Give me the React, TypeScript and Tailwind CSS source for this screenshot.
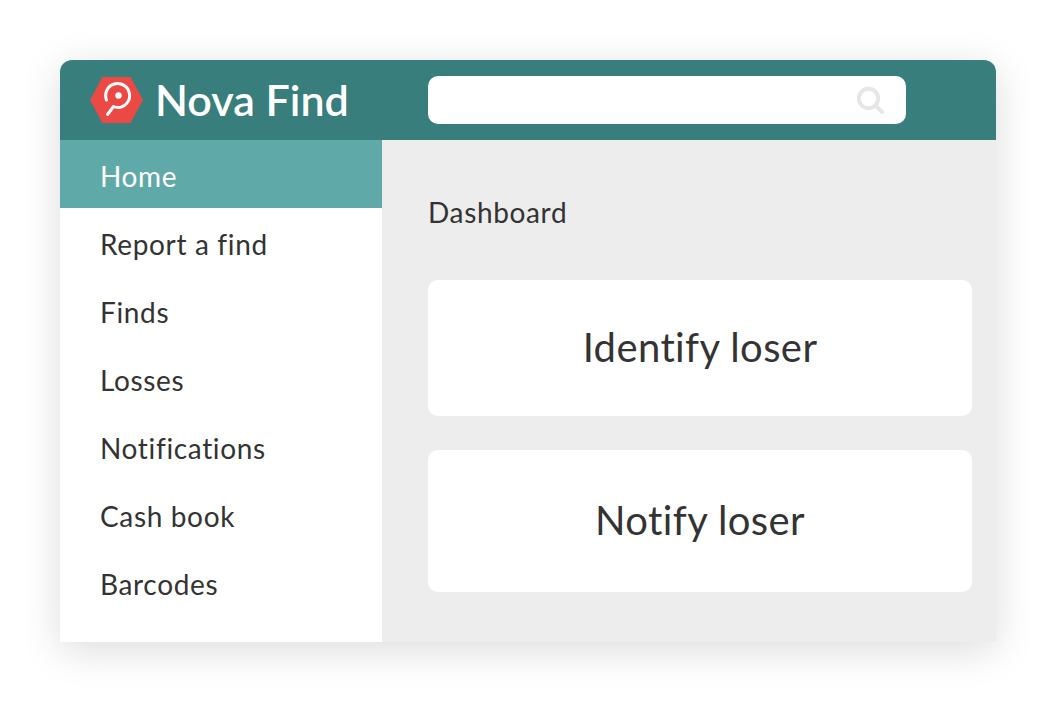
const navItems = ['Home', 'Report a find', 'Finds', 'Losses', 'Notifications', 'Cash book', 'Barcodes'];

function Logo() {
  return (
    <svg width="54" height="46" viewBox="0 0 54 46" className="shrink-0">
      <polygon points="0,23 12.500,0 40.500,0 53,23 40.500,46 12.500,46" fill="#ec4844" />
      <path
        d="M16.500 23 A12 12 0 1 1 28.500 30.500 C26.500 30.500 24.500 30 23.500 29.500 L17.500 37.500"
        stroke="#fff"
        strokeWidth="3"
        strokeLinecap="round"
        strokeLinejoin="round"
        fill="none"
      />
      <circle cx="28.500" cy="18.500" r="3.200" fill="#fff" />
    </svg>
  );
}

function SearchIcon() {
  return (
    <svg width="28" height="28" viewBox="0 0 28 28" fill="none" stroke="#e6e6e6" strokeWidth="4" strokeLinecap="round">
      <circle cx="11.500" cy="12.500" r="9.700" />
      <path d="M19.500 20.500 L25 26" />
    </svg>
  );
}

export default function App() {
  return (
    <div className="w-[1056px] h-[702px] bg-white pt-[60px] pl-[60px] font-['Lato',sans-serif] overflow-hidden">
      <div className="w-[936px] h-[582px] flex flex-col rounded-t-[12px] shadow-[0_8px_40px_rgba(0,0,0,0.14)] text-[#333333]">
        <header className="h-[80px] shrink-0 flex items-center bg-[#377e7c] rounded-t-[12px]">
          <div className="w-[368px] flex items-center pl-[30px] gap-[11px]">
            <Logo />
            <span className="text-[43px] leading-none font-semibold text-white -translate-y-px">Nova Find</span>
          </div>
          <div className="w-[478px] h-[48px] bg-white rounded-[10px] flex items-center justify-end pr-[21px]">
            <SearchIcon />
          </div>
        </header>
        <div className="flex-1 flex min-h-0">
          <nav className="w-[322px] bg-white">
            {navItems.map((item, i) => (
              <div
                key={item}
                className={`h-[68px] flex items-center pl-[40px] pt-[3px] text-[28px] tracking-[0.65px] ${
                  i === 0 ? 'bg-[#5faaa8] text-white' : ''
                }`}
              >
                {item}
              </div>
            ))}
          </nav>
          <main className="flex-1 bg-[#ededed] pl-[46px] pr-[24px] pt-[53px]">
            <div className="h-[38px] flex items-center text-[28px] tracking-[0.65px]">Dashboard</div>
            <div className="mt-[49px] h-[136px] bg-white rounded-[10px] flex items-center justify-center pb-[2px] text-[40px] tracking-[0.4px]">
              Identify loser
            </div>
            <div className="mt-[34px] h-[142px] bg-white rounded-[10px] flex items-center justify-center pb-[2px] text-[40px] tracking-[0.4px]">
              Notify loser
            </div>
          </main>
        </div>
      </div>
    </div>
  );
}
